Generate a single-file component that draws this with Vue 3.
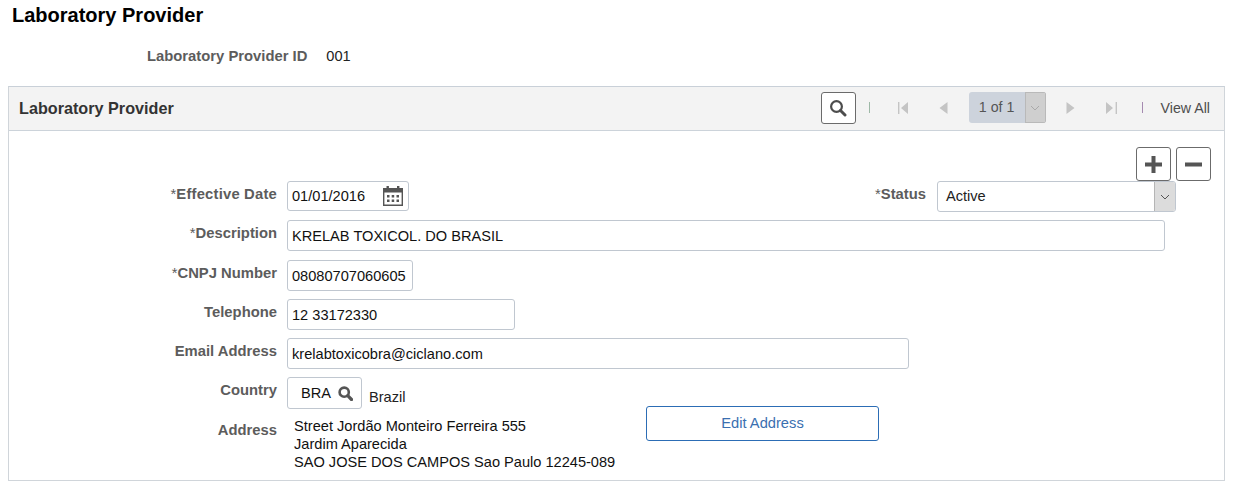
<script setup>
const rows = [
  { req: true, label: 'Description', value: 'KRELAB TOXICOL. DO BRASIL', width: 878, height: 31, gap: 8 },
  { req: true, label: 'CNPJ Number', value: '08080707060605', width: 126, height: 31, gap: 9 },
  { req: false, label: 'Telephone', value: '12 33172330', width: 228, height: 31, gap: 8 },
  { req: false, label: 'Email Address', value: 'krelabtoxicobra@ciclano.com', width: 622, height: 31, gap: 8 }
]
</script>

<template>
  <div class="page">
    <h1 class="title">Laboratory Provider</h1>
    <div class="id-row">
      <span class="label id-label">Laboratory Provider ID</span>
      <span class="id-value">001</span>
    </div>

    <section class="box">
      <header class="box-head">
        <h2 class="box-title">Laboratory Provider</h2>
        <div class="nav">
          <button class="icon-btn search-btn" aria-label="Search">
            <svg width="18" height="18" viewBox="0 0 18 18"><circle cx="7.500" cy="7.500" r="5.400" fill="none" stroke="#4d4d4d" stroke-width="2.200"/><path d="M11.500 11.500L16 16" stroke="#4d4d4d" stroke-width="3" stroke-linecap="round"/></svg>
          </button>
          <span class="sep sep-green"></span>
          <svg class="nav-first" width="11" height="12" viewBox="0 0 11 12"><path d="M0 0h1.400v12H0zM10 0v12L3 6z" fill="#c4c4c4"/></svg>
          <svg class="nav-prev" width="9" height="12" viewBox="0 0 9 12"><path d="M8.500 0v12L0.500 6z" fill="#c4c4c4"/></svg>
          <div class="pager">
            <span class="pager-text">1 of 1</span>
            <span class="pager-drop">
              <svg width="10" height="6" viewBox="0 0 10 6"><path d="M1 1l4 4 4-4" fill="none" stroke="#a9a9a9"/></svg>
            </span>
          </div>
          <svg class="nav-next" width="9" height="12" viewBox="0 0 9 12"><path d="M0.500 0v12L8.500 6z" fill="#c4c4c4"/></svg>
          <svg class="nav-last" width="11" height="12" viewBox="0 0 11 12"><path d="M0 0v12L7 6zM9.600 0H11v12H9.600z" fill="#c4c4c4"/></svg>
          <span class="sep sep-purple"></span>
          <span class="view-all">View All</span>
        </div>
      </header>

      <div class="box-body">
        <div class="actions">
          <button class="icon-btn act-btn" aria-label="Add">
            <svg width="17" height="17" viewBox="0 0 17 17"><path d="M6.500 0h4v6.500H17v4h-6.500V17h-4v-6.500H0v-4h6.500z" fill="#555"/></svg>
          </button>
          <button class="icon-btn act-btn" aria-label="Remove">
            <svg width="17" height="17" viewBox="0 0 17 17"><rect y="6.500" width="17" height="4" fill="#555"/></svg>
          </button>
        </div>

        <div class="row first-row">
          <span class="label col-label"><span class="req">*</span><span class="wide">Effective Date</span></span>
          <div class="field date-field">
            <span>01/01/2016</span>
            <svg width="20" height="20" viewBox="0 0 20 20">
              <path d="M0.700 2.700h18.600v16.600H0.700z" fill="none" stroke="#555" stroke-width="1.400"/>
              <path d="M0 2h20v4.500H0zM3.500 0h2.400v3H3.500zM14 0h2.400v3H14z" fill="#555"/>
              <path d="M4 9h2.500v2.500H4zM8.700 9h2.500v2.500H8.700zM13.500 9H16v2.500h-2.500zM4 13.500h2.500V16H4zM8.700 13.500h2.500V16H8.700zM13.500 13.500H16V16h-2.500z" fill="#555"/>
            </svg>
          </div>
          <span class="label status-label"><span class="req">*</span>Status</span>
          <div class="field select-field">
            <span class="select-text">Active</span>
            <span class="select-drop">
              <svg width="10" height="6" viewBox="0 0 10 6"><path d="M1 1l4 4 4-4" fill="none" stroke="#555"/></svg>
            </span>
          </div>
        </div>

        <div v-for="r in rows" :key="r.label" class="row" :style="{ marginTop: r.gap + 'px' }">
          <span class="label col-label"><span v-if="r.req" class="req">*</span>{{ r.label }}</span>
          <div class="field" :style="{ width: r.width + 'px', height: r.height + 'px' }">{{ r.value }}</div>
        </div>

        <div class="row country-row">
          <span class="label col-label">Country</span>
          <div class="field country-field">
            <span>BRA</span>
            <svg width="15" height="15" viewBox="0 0 15 15"><circle cx="6.200" cy="6.200" r="4.600" fill="none" stroke="#555" stroke-width="2.600"/><path d="M9.700 9.700L13.500 13.500" stroke="#555" stroke-width="3.200" stroke-linecap="round"/></svg>
          </div>
          <span class="country-name">Brazil</span>
        </div>

        <div class="row address-row">
          <span class="label col-label address-label">Address</span>
          <div class="address-text">
            <div>Street Jordão Monteiro Ferreira 555</div>
            <div>Jardim Aparecida</div>
            <div>SAO JOSE DOS CAMPOS Sao Paulo 12245-089</div>
          </div>
          <button class="edit-btn">Edit Address</button>
        </div>
      </div>
    </section>
  </div>
</template>

<style>
html, body { margin: 0; background: #fff; }
</style>

<style scoped>
.page {
  width: 1235px;
  height: 491px;
  overflow: hidden;
  font-family: "Liberation Sans", Arial, sans-serif;
  font-size: 14.6px;
  color: #000;
  box-sizing: border-box;
}
.title {
  margin: 0;
  padding: 5px 0 0 12px;
  font-size: 20px;
  line-height: 21px;
  font-weight: 700;
}
.id-row {
  display: flex;
  padding: 21px 0 0 147px;
  line-height: 18px;
  height: 18px;
}
.label {
  font-weight: 700;
  font-size: 14.8px;
  color: #5c5c5c;
  line-height: 18px;
}
.req { font-weight: 400; }
.wide { letter-spacing: 0.2px; }
.id-value { margin-left: 19px; color: #222; }
.box {
  margin: 21px 0 0 8px;
  width: 1217px;
  height: 395px;
  box-sizing: border-box;
  border: 1px solid #d0d5da;
  border-top-color: #c9d0d8;
}
.box-head {
  display: flex;
  align-items: center;
  justify-content: space-between;
  height: 44px;
  box-sizing: border-box;
  background: #f3f3f3;
  border-bottom: 1px solid #ccd3da;
  padding: 0 14px 0 10px;
}
.box-title {
  margin: 0;
  font-size: 16.2px;
  font-weight: 700;
  color: #333;
}
.nav { display: flex; align-items: center; height: 32px; margin-top: -2px; font-size: 14.2px; }
.icon-btn {
  display: flex;
  align-items: center;
  justify-content: center;
  padding: 0;
  box-sizing: border-box;
  background: #fff;
  border: 1px solid #6b6b6b;
  border-radius: 3px;
}
.search-btn { width: 35px; height: 32px; }
.sep { display: block; width: 1px; height: 11px; }
.sep-green { margin-left: 13px; background: #9db8a6; }
.sep-purple { margin-left: 25px; background: #a58ab0; }
.nav-first { margin-left: 28px; }
.nav-prev { margin-left: 30px; }
.pager {
  display: flex;
  margin-left: 21px;
  width: 77px;
  height: 31px;
  background: #cdd3dc;
  border-radius: 3px;
  overflow: hidden;
}
.pager-text {
  flex: 1;
  text-align: center;
  line-height: 30px;
  color: #555;
}
.pager-drop {
  display: flex;
  align-items: center;
  justify-content: center;
  width: 21px;
  box-sizing: border-box;
  background: #cfcfcf;
  border: 1px solid #b9b9b9;
}
.nav-next { margin-left: 20px; }
.nav-last { margin-left: 31px; }
.view-all { margin-left: 18px; color: #4d4d4d; }

.box-body { padding: 16px 0 0 0; }
.actions {
  display: flex;
  justify-content: flex-end;
  gap: 5px;
  padding-right: 13px;
}
.act-btn { width: 35px; height: 34px; }
.row { display: flex; align-items: flex-start; }
.col-label {
  width: 268px;
  flex: none;
  text-align: right;
  margin-right: 10px;
  padding-top: 4px;
}
.field {
  display: flex;
  align-items: center;
  box-sizing: border-box;
  padding: 0 4px;
  background: #fff;
  border: 1px solid #c0c7d0;
  border-radius: 3px;
  line-height: 18px;
  color: #111;
}
.date-field {
  width: 122px;
  height: 30px;
  justify-content: space-between;
  padding-right: 5px;
}
.status-label { margin-left: 465px; margin-right: 11px; width: 52px; white-space: nowrap; text-align: right; padding-top: 4px; }
.select-field {
  width: 239px;
  height: 31px;
  padding: 0;
  overflow: hidden;
}
.select-text { flex: 1; padding: 0 0 2px 8px; color: #222; }
.select-drop {
  display: flex;
  align-items: center;
  justify-content: center;
  width: 21px;
  height: 100%;
  box-sizing: border-box;
  background: #dcdcdc;
  border-left: 1px solid #b5b5b5;
}
.country-row { margin-top: 8px; }
.country-field {
  width: 75px;
  height: 32px;
  padding: 0 8px 0 13px;
  justify-content: space-between;
}
.country-name { margin-left: 7px; margin-top: 11px; line-height: 18px; color: #222; }
.address-row { margin-top: 8px; }
.address-label { padding-top: 4px; }
.address-text {
  margin-left: 7px;
  width: 352px;
  line-height: 18px;
  color: #111;
}
.edit-btn {
  margin-top: -11px;
  width: 233px;
  height: 35px;
  padding: 0 0 2px;
  box-sizing: border-box;
  background: #fff;
  border: 1px solid #2c6db5;
  border-radius: 3px;
  color: #3a6fb0;
  font: 14.7px "Liberation Sans", Arial, sans-serif;
}
</style>
